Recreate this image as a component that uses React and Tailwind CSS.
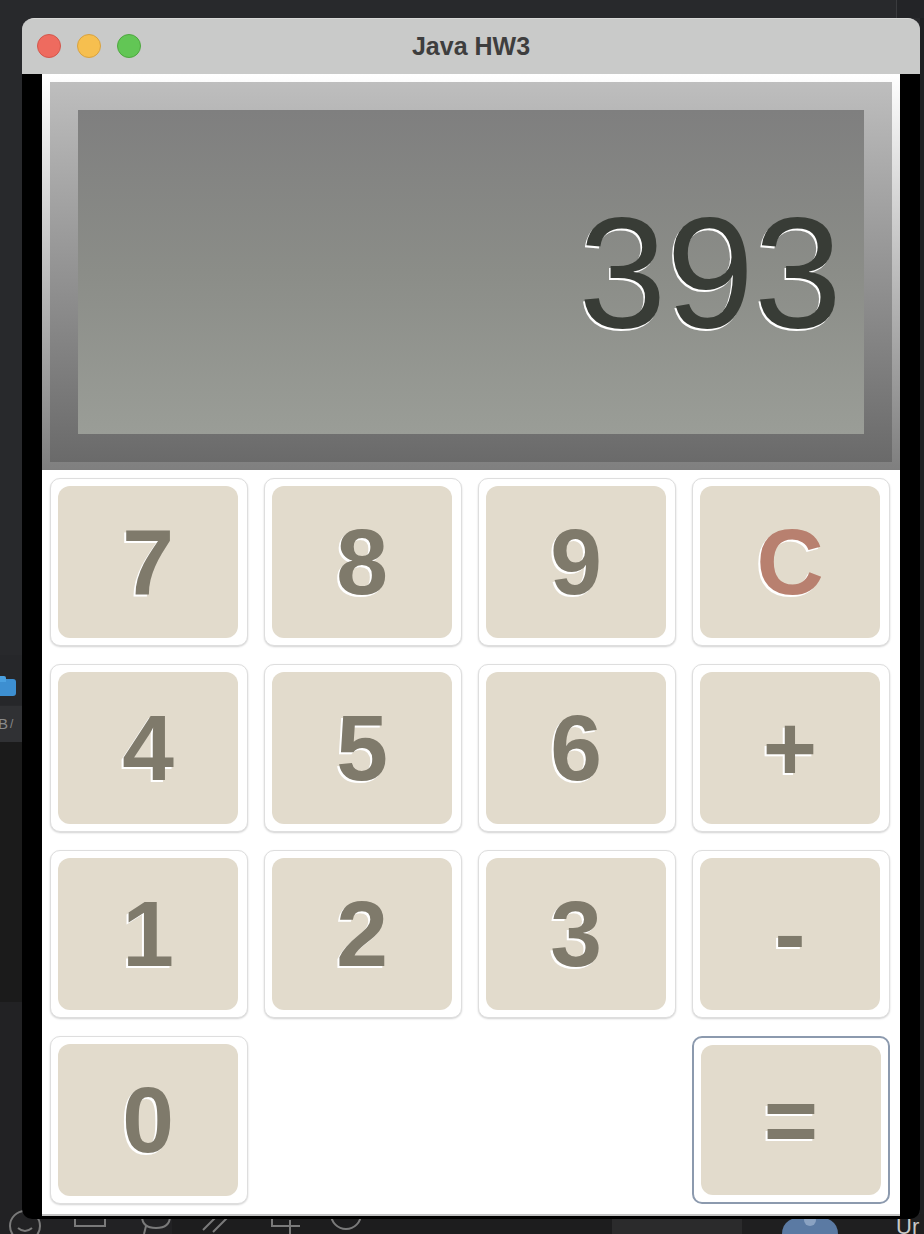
import React from "react";

const keys = [
  { k: "7" }, { k: "8" }, { k: "9" }, { k: "C", red: true },
  { k: "4" }, { k: "5" }, { k: "6" }, { k: "+" },
  { k: "1" }, { k: "2" }, { k: "3" }, { k: "-" },
  { k: "0" }, { empty: true }, { empty: true }, { k: "=", focus: true },
];

function Key({ k, red, focus, empty }) {
  if (empty) return <div />;
  return (
    <div
      className={
        focus
          ? "rounded-[10px] border-2 border-[#8c9aae] bg-white p-[7px]"
          : "rounded-[10px] border border-[#dedede] bg-white p-[7px] pr-[9px] shadow-[0_1px_2px_rgba(0,0,0,0.18)]"
      }
    >
      <div className="flex h-full w-full items-center justify-center rounded-[12px] bg-[#e2dbcc]">
        <span
          className={
            "font-['Liberation_Sans',Arial,sans-serif] text-[93px] font-bold leading-none [text-shadow:-2px_2px_0_#ffffff] " +
            (red ? "text-[#b8806f]" : "text-[#7f7a6b]")
          }
        >
          {k}
        </span>
      </div>
    </div>
  );
}

function Desktop() {
  return (
    <div className="absolute inset-0">
      <div className="absolute left-0 top-[655px] h-[50px] w-[22px] bg-[#26272a]">
        <div className="absolute left-[-4px] top-[24px] h-[17px] w-[20px] rounded-[3px] bg-[#3d8fd1]" />
        <div className="absolute left-[-4px] top-[21px] h-[6px] w-[10px] rounded-t-[2px] bg-[#4aa0e0]" />
      </div>
      <div className="absolute left-0 top-[706px] flex h-[36px] w-[22px] items-center bg-[#303134] font-['Liberation_Sans',Arial,sans-serif] text-[15px] text-[#8a8a8a]">
        <span className="ml-[-2px]">B</span>
        <span className="ml-[2px] text-[12px]">/</span>
      </div>
      <div className="absolute left-0 top-[742px] h-[260px] w-[22px] bg-[#1b1b1b]" />
      <div className="absolute left-0 top-[1002px] h-[232px] w-[22px] bg-[#222224]" />
      <div className="absolute left-[896px] top-0 h-[18px] w-[1px] bg-[#3a3b3e]" />
      <div className="absolute left-[897px] top-0 h-[18px] w-[27px] bg-[#232427]" />
      <div className="absolute left-[920px] top-[18px] h-[1216px] w-[4px] bg-[#1f2022]" />
      <div className="absolute bottom-0 left-0 flex h-[20px] w-[924px]">
        <div className="h-full w-[172px] bg-[#222224]" />
        <div className="h-full w-[440px] bg-[#1d1d1e]" />
        <div className="h-full w-[130px] bg-[#2b2b2c]" />
        <div className="h-full flex-1 bg-[#1f1f20]" />
      </div>
      <svg className="absolute bottom-0 left-0" width="924" height="24" viewBox="0 0 924 24">
        <g fill="none" stroke="#7a7a7a" strokeWidth="2">
          <circle cx="25" cy="16" r="15" />
          <path d="M18 18 q7 6 14 0" />
          <rect x="75" y="-4" width="30" height="20" />
          <path d="M142 6 q0 12 14 12 q14 0 14 -12 M146 16 l-2 8" />
          <path d="M203 20 l14 -14 M213 22 l14 -14" />
          <path d="M272 6 v10 h28 M290 10 v14" />
          <circle cx="346" cy="4" r="15" />
        </g>
        <path d="M782 24 q0 -18 28 -18 q28 0 28 18 z" fill="#5b7aa3" />
        <circle cx="810" cy="10" r="6" fill="#8aa2c2" />
        <text x="896" y="24" fill="#c8c8c8" fontSize="22" fontFamily="Liberation Sans, Arial, sans-serif">Ur</text>
      </svg>
    </div>
  );
}

export default function App() {
  return (
    <div className="relative h-[1234px] w-[924px] overflow-hidden bg-[#28292c]">
      <Desktop />
      <div className="absolute left-[22px] top-[18px] w-[898px]">
        <div className="relative flex h-[56px] items-center justify-center rounded-t-[12px] border-t border-[#d8d9d8] bg-[#c9cac9]">
          <div className="absolute left-[15px] top-[15px] flex gap-[16px]">
            <div className="h-[24px] w-[24px] rounded-full border border-[#d3574c] bg-[#ee6b5f]" />
            <div className="h-[24px] w-[24px] rounded-full border border-[#d8a240] bg-[#f6bf4f]" />
            <div className="h-[24px] w-[24px] rounded-full border border-[#4ea73f] bg-[#62c655]" />
          </div>
          <span className="font-['Liberation_Sans',Arial,sans-serif] text-[25px] font-bold tracking-[0px] text-[#3e3e3e]">
            Java HW3
          </span>
        </div>
        <div className="rounded-b-[10px] bg-black pb-[3px] pl-[20px] pr-[20px]">
          <div className="flex h-[1142px] w-[858px] flex-col border-b-2 border-[#c4c4c4] bg-white">
            <div className="h-[396px] bg-gradient-to-b from-[#ffffff] to-[#7f7f7f] p-[8px]">
              <div className="h-full bg-gradient-to-b from-[#bebebe] to-[#6a6a6a] p-[28px]">
                <div className="flex h-full items-center justify-end bg-gradient-to-b from-[#7f7f7f] via-[#8b8d88] to-[#9a9d97] pr-[22px]">
                  <span className="font-['Liberation_Sans',Arial,sans-serif] text-[158px] font-normal leading-none text-[#383c36] [text-shadow:-1.5px_1.5px_0_#ffffff]">
                    393
                  </span>
                </div>
              </div>
            </div>
            <div className="grid grid-cols-[repeat(4,198px)] grid-rows-[repeat(4,168px)] gap-x-[16px] gap-y-[18px] pl-[8px] pt-[8px]">
              {keys.map((key, i) => (
                <Key key={i} {...key} />
              ))}
            </div>
          </div>
        </div>
      </div>
    </div>
  );
}
